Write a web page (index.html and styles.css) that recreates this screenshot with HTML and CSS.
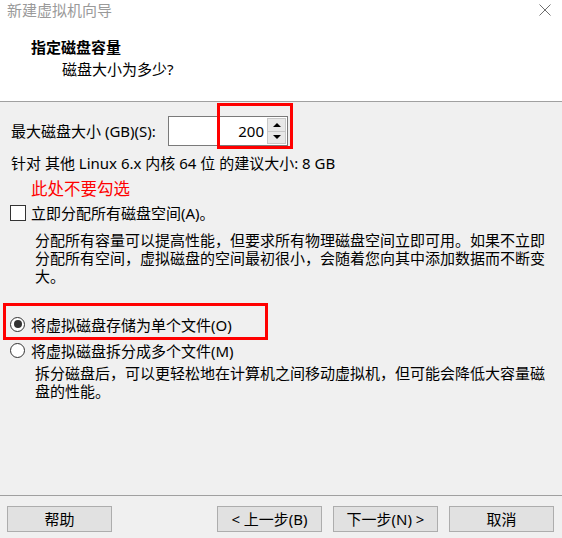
FILE: index.html
```html
<!DOCTYPE html>
<html lang="zh-CN">
<head>
<meta charset="utf-8">
<title>新建虚拟机向导</title>
<link rel="stylesheet" href="styles.css">
</head>
<body>
<div class="dialog">
  <header class="top">
    <div class="titlebar">
      <span class="title">新建虚拟机向导</span>
      <svg class="close" width="14" height="14" viewBox="0 0 14 14"><path d="M1.5 1.5L12.5 12.5M12.5 1.5L1.5 12.5" stroke="#6f6f6f" stroke-width="1" fill="none"/></svg>
    </div>
    <div class="heading">指定磁盘容量</div>
    <div class="sub">磁盘大小为多少?</div>
  </header>
  <main class="content">
    <div class="size-row">
      <span class="size-label">最大磁盘大小 (GB)(S):</span>
      <div class="spin">
        <div class="spin-field">200</div>
        <div class="spin-btns">
          <div class="sb"><span class="tri up"></span></div>
          <div class="sb"><span class="tri down"></span></div>
        </div>
        <div class="mark mark-spin"></div>
      </div>
    </div>
    <div class="rec">针对 其他 Linux 6.x 内核 64 位 的建议大小: 8 GB</div>
    <div class="note">此处不要勾选</div>
    <div class="check-row"><span class="checkbox"></span><span>立即分配所有磁盘空间(A)。</span></div>
    <div class="desc">
      <div class="dl">分配所有容量可以提高性能，但要求所有物理磁盘空间立即可用。如果不立即</div>
      <div class="dl">分配所有空间，虚拟磁盘的空间最初很小，会随着您向其中添加数据而不断变</div>
      <div class="dl">大。</div>
    </div>
    <div class="radio-group">
      <div class="radio-row"><span class="radio on"></span><span>将虚拟磁盘存储为单个文件(O)</span></div>
      <div class="radio-row"><span class="radio"></span><span>将虚拟磁盘拆分成多个文件(M)</span></div>
      <div class="mark mark-radio"></div>
    </div>
    <div class="desc desc2">
      <div class="dl">拆分磁盘后，可以更轻松地在计算机之间移动虚拟机，但可能会降低大容量磁</div>
      <div class="dl">盘的性能。</div>
    </div>
  </main>
  <footer class="footer">
    <button class="btn">帮助</button>
    <div class="nav">
      <button class="btn">&lt; 上一步(B)</button>
      <button class="btn">下一步(N) &gt;</button>
      <button class="btn">取消</button>
    </div>
  </footer>
</div>
</body>
</html>
```

FILE: styles.css
```css
html, body {
  margin: 0;
  padding: 0;
}
body {
  width: 562px;
  height: 538px;
  overflow: hidden;
  background: #f0f0f0;
  font-family: "Noto Sans", "Noto Sans CJK SC", sans-serif;
  font-size: 15px;
  color: #000;
}
.dialog {
  display: flex;
  flex-direction: column;
  height: 538px;
}
.top {
  height: 101px;
  background: #fff;
  border-bottom: 1px solid #a0a0a0;
}
.titlebar {
  display: flex;
  justify-content: space-between;
  align-items: center;
  height: 20px;
  padding: 0 10px 0 7px;
}
.title {
  color: #9a9a9a;
  line-height: 20px;
}
.close {
  display: block;
  margin-top: 0;
}
.heading {
  font-weight: bold;
  line-height: 22px;
  margin-top: 16px;
  padding-left: 31px;
}
.sub {
  line-height: 22px;
  padding-left: 62px;
}
.content {
  flex: 1;
}
.size-row {
  display: flex;
  align-items: center;
  margin-top: 14px;
  padding-left: 11px;
}
.size-label {
  width: 157px;
  line-height: 20px;
}
.spin {
  position: relative;
  display: flex;
  box-sizing: border-box;
  width: 120px;
  height: 30px;
  border: 1px solid #7a7a7a;
  background: #fff;
}
.spin-field {
  flex: 1;
  text-align: right;
  line-height: 28px;
  padding-right: 3px;
}
.spin-btns {
  display: flex;
  flex-direction: column;
  width: 19px;
  padding: 1px 1px 1px 0;
}
.sb {
  flex: 1;
  display: flex;
  align-items: center;
  justify-content: center;
  background: #e8e8e8;
  border: 1px solid #c8c8c8;
}
.sb + .sb {
  border-top: none;
}
.tri {
  width: 0;
  height: 0;
  border-left: 4px solid transparent;
  border-right: 4px solid transparent;
}
.tri.up {
  border-bottom: 4px solid #000;
}
.tri.down {
  border-top: 4px solid #000;
}
.mark {
  position: absolute;
  box-sizing: border-box;
  border: 3px solid #ff0000;
}
.mark-spin {
  left: 48px;
  top: -14px;
  width: 76px;
  height: 46px;
}
.rec {
  margin-top: 7px;
  padding-left: 11px;
  line-height: 20px;
}
.note {
  margin-top: 5px;
  padding-left: 31px;
  line-height: 22px;
  font-size: 16.5px;
  color: #ff0000;
}
.check-row {
  display: flex;
  align-items: center;
  margin-top: 3px;
  padding-left: 10px;
  line-height: 20px;
}
.checkbox {
  box-sizing: border-box;
  width: 16px;
  height: 16px;
  border: 1px solid #333;
  background: #fff;
  margin-right: 5px;
}
.desc {
  margin-top: 8px;
  padding-left: 35px;
}
.dl {
  height: 18px;
  line-height: 18px;
  white-space: nowrap;
}
.radio-group {
  position: relative;
  margin-top: 26px;
}
.radio-row {
  display: flex;
  align-items: center;
  height: 26px;
  padding-left: 10px;
}
.radio {
  box-sizing: border-box;
  width: 15px;
  height: 15px;
  border: 1px solid #333;
  border-radius: 50%;
  background: #fff;
  margin-right: 6px;
  display: flex;
  align-items: center;
  justify-content: center;
}
.radio.on::after {
  content: "";
  width: 8px;
  height: 8px;
  border-radius: 50%;
  background: #333;
}
.mark-radio {
  left: 3px;
  top: -8px;
  width: 265px;
  height: 37px;
}
.desc2 {
  margin-top: 1px;
}
.footer {
  display: flex;
  justify-content: space-between;
  height: 43px;
  border-top: 1px solid #a0a0a0;
  padding: 10px 8px 0 7px;
  box-sizing: border-box;
}
.nav {
  display: flex;
  gap: 11px;
}
.btn {
  width: 105px;
  height: 26px;
  box-sizing: border-box;
  background: #e1e1e1;
  border: 1px solid #adadad;
  font-family: "Noto Sans", "Noto Sans CJK SC", sans-serif;
  font-size: 15px;
  line-height: 22px;
  padding: 0;
  color: #000;
}
```
